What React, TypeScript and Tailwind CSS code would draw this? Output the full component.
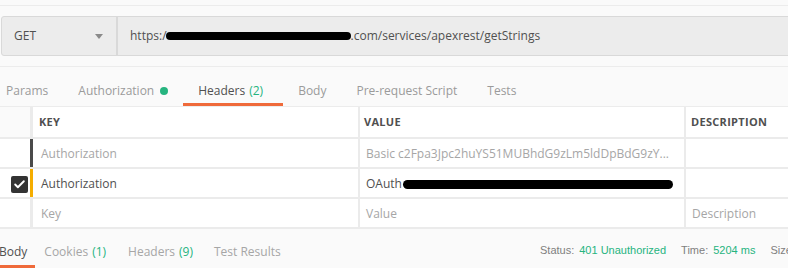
import { Check } from "lucide-react";

const green = "text-[#26b47f]";

function Tab({
  label,
  count,
  active,
  dot,
  pad = "px-[15px]",
}: {
  label: string;
  count?: string;
  active?: boolean;
  dot?: boolean;
  pad?: string;
}) {
  return (
    <div
      className={
        "relative flex h-full items-center pt-[8px] text-[12px] " +
        pad +
        " " +
        (active ? "text-[#505050]" : "text-[#9b9b9b]")
      }
    >
      <span>{label}</span>
      {count && <span className={"ml-1 " + green}>{count}</span>}
      {dot && <span className="ml-[6px] inline-block size-[8px] rounded-full bg-[#26b47f]" />}
      {active && <span className="absolute inset-x-0 bottom-0 h-[3px] bg-[#ef6a3a]" />}
    </div>
  );
}

function Row({
  marker,
  checked,
  keyText,
  value,
  desc,
  muted,
}: {
  marker: string;
  checked?: boolean;
  keyText: string;
  value: React.ReactNode;
  desc?: string;
  muted?: boolean;
}) {
  const tone = muted ? "text-[#a6a6a6]" : "text-[#505050]";
  return (
    <div className="flex h-[30px] border-b-2 border-[#ebebeb] bg-white pt-[2px] text-[12px]">
      <div className="flex w-[30px] shrink-0 items-center pl-[11px]">
        {checked && (
          <span className="flex size-[17px] items-center justify-center rounded-[2px] bg-[#333]">
            <Check className="size-[13px] text-white" strokeWidth={3.5} />
          </span>
        )}
      </div>
      <div className={"-mt-[2px] w-[3px] shrink-0 " + marker} />
      <div className={"flex w-[325px] shrink-0 items-center pl-[8px] " + tone}>{keyText}</div>
      <div className="-mt-[2px] w-[2px] shrink-0 bg-[#ebebeb]" />
      <div className={"flex w-[324px] shrink-0 items-center overflow-hidden whitespace-nowrap pl-[6px] " + tone}>
        {value}
      </div>
      <div className="-mt-[2px] w-[2px] shrink-0 bg-[#ebebeb]" />
      <div className="flex flex-1 items-center pl-[6px] text-[#a6a6a6]">{desc}</div>
    </div>
  );
}

export default function App() {
  return (
    <div className="h-[268px] w-[788px] overflow-hidden bg-[#fafafa] font-['Open_Sans',sans-serif]">
      <div className="h-[5px]" />
      <div className="border-t border-[#ececec] py-[10px]">
        <div className="ml-px flex h-[40px] w-[820px] rounded-[3px] border border-[#d9d9d9] bg-[#ececec]">
          <div className="flex w-[116px] shrink-0 items-center justify-between border-r-2 border-[#d9d9d9] pl-[12px] pr-[13px] text-[12px] text-[#505050]">
            <span>GET</span>
            <span className="h-0 w-0 border-x-[4px] border-t-[5px] border-x-transparent border-t-[#8a8a8a]" />
          </div>
          <div className="flex items-center pl-[12px] text-[12px] text-[#505050]">
            <span>https:/</span>
            <span className="ml-[-1px] inline-block h-[8px] w-[185px] rounded-full bg-black" />
            <span>.com/services/apexrest/getStrings</span>
          </div>
        </div>
      </div>
      <div className="flex h-[41px] border-y border-[#ececec]">
        <div className="ml-[-9px] flex h-full">
          <Tab label="Params" />
          <Tab label="Authorization" dot />
          <Tab label="Headers" count="(2)" active pad="pl-[15px] pr-[20px]" />
          <Tab label="Body" />
          <Tab label="Pre-request Script" />
          <Tab label="Tests" />
        </div>
      </div>

      <div>
        <div className="flex h-[32px] border-b-2 border-[#ebebeb] bg-white text-[11px] font-bold tracking-[0.3px] text-[#505050]">
          <div className="w-[30px] shrink-0 bg-[#fafafa]" />
          <div className="w-[3px] shrink-0 bg-[#ebebeb]" />
          <div className="flex w-[325px] shrink-0 items-center pl-[6px]">KEY</div>
          <div className="w-[2px] shrink-0 bg-[#ebebeb]" />
          <div className="flex w-[324px] shrink-0 items-center pl-[4px]">VALUE</div>
          <div className="w-[2px] shrink-0 bg-[#ebebeb]" />
          <div className="flex flex-1 items-center pl-[5px]">DESCRIPTION</div>
        </div>
        <Row
          marker="bg-[#4a4a4a]"
          keyText="Authorization"
          muted
          value={<span>Basic c2Fpa3Jpc2huYS51MUBhdG9zLm5ldDpBdG9zY...</span>}
        />
        <Row
          marker="bg-[#f5ad00]"
          checked
          keyText="Authorization"
          value={
            <>
              <span>OAuth</span>
              <span className="ml-px inline-block h-[9px] w-[270px] rounded-full bg-black" />
            </>
          }
        />
        <Row marker="bg-[#ebebeb]" keyText="Key" muted value={<span>Value</span>} desc="Description" />
      </div>

      <div className="flex h-[39px] items-stretch">
        <div className="ml-[-1px] flex h-full w-[541px] shrink-0">
          <div className="relative flex items-center pr-[8px] pt-[7px] text-[12px] text-[#505050]">
            Body
            <span className="absolute inset-x-0 bottom-0 h-[3px] bg-[#ef6a3a]" />
          </div>
          <div className="flex items-center pl-[9px] pr-[11px] pt-[7px] text-[12px] text-[#a6a6a6]">
            Cookies <span className={"ml-1 " + green}>(1)</span>
          </div>
          <div className="flex items-center px-[11px] pt-[7px] text-[12px] text-[#a6a6a6]">
            Headers <span className={"ml-1 " + green}>(9)</span>
          </div>
          <div className="flex items-center px-[10px] pt-[7px] text-[12px] text-[#a6a6a6]">Test Results</div>
        </div>
        <div className="flex items-center whitespace-nowrap pt-[4px] font-['Liberation_Sans',sans-serif] text-[11px] text-[#808080]">
          <span>Status:</span>
          <span className={"ml-[5px] " + green}>401 Unauthorized</span>
          <span className="ml-[15px]">Time:</span>
          <span className={"ml-[5px] " + green}>5204 ms</span>
          <span className="ml-[15px]">Size:</span>
        </div>
      </div>
    </div>
  );
}
